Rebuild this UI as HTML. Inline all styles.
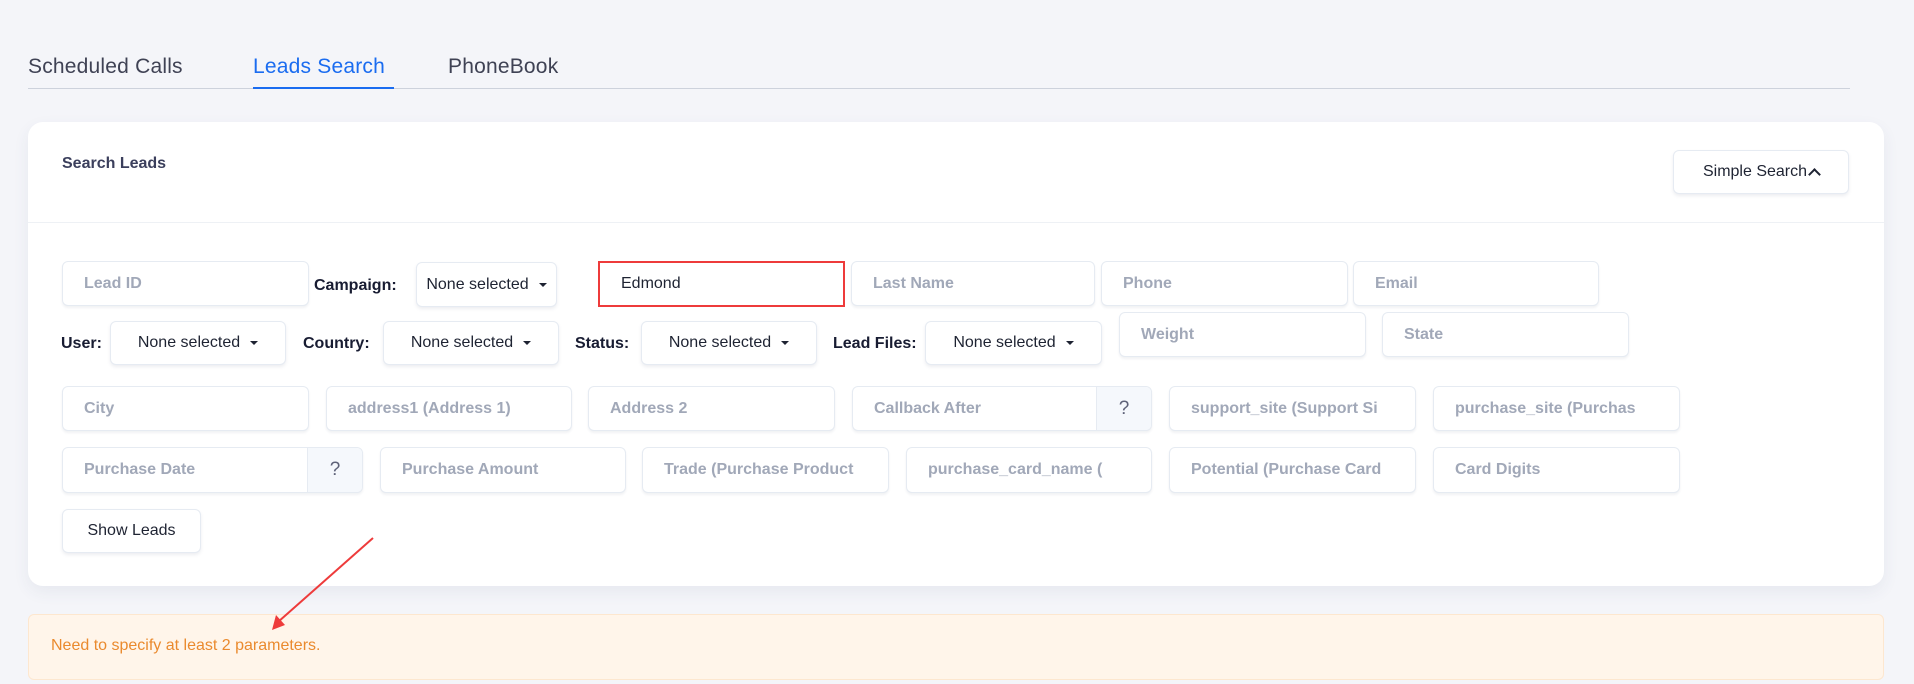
<!DOCTYPE html>
<html><head><meta charset="utf-8"><style>
*{box-sizing:border-box;margin:0;padding:0}
body{width:1914px;height:684px;background:#f4f5f9;font-family:"Liberation Sans",sans-serif;position:relative;overflow:hidden}
.a{position:absolute}
.tab{position:absolute;top:55px;font-size:21px;color:#3f4254;letter-spacing:0.2px}
.card{left:28px;top:122px;width:1856px;height:464px;background:#fff;border-radius:15px;box-shadow:0 6px 16px rgba(60,70,110,.07)}
.inp{position:absolute;background:#fff;border:1px solid #e6ebf2;border-radius:6px;box-shadow:0 2px 2px rgba(80,90,120,.08);color:#a1a8b8;font-size:16px;font-weight:bold;padding-left:21px;white-space:nowrap;overflow:hidden;display:flex;align-items:center}
.sel{position:absolute;background:#fff;border:1px solid #e6ebf2;border-radius:6px;box-shadow:0 2px 3px rgba(80,90,120,.1);color:#1e2332;font-size:16px;display:flex;align-items:center;justify-content:center;white-space:nowrap}
.sel:after{content:"";border-left:4px solid transparent;border-right:4px solid transparent;border-top:4px solid #1e2332;margin-left:10px}
.sel.ns:after{display:none}
.lbl{position:absolute;font-size:16px;font-weight:bold;color:#181c32}
.q{position:absolute;right:0;top:0;bottom:0;background:#f5f8fc;border-left:1px solid #e6ebf2;width:55px;display:flex;align-items:center;justify-content:center;color:#5e6278;font-size:19px;font-weight:normal}
</style></head><body>
<div class="tab" style="left:28px">Scheduled Calls</div>
<div class="tab" style="left:253px;color:#1a6cf0">Leads Search</div>
<div class="tab" style="left:448px">PhoneBook</div>
<div class="a" style="left:28px;top:88px;width:1822px;height:1px;background:#cdd2dc"></div>
<div class="a" style="left:253px;top:87px;width:141px;height:2px;background:#1a6cf0"></div>

<div class="a card"></div>
<div class="a" style="left:62px;top:155px;font-size:16px;font-weight:bold;color:#3b3f5c">Search Leads</div>
<div class="a" style="left:28px;top:222px;width:1856px;height:1px;background:#eef1f5"></div>
<div class="sel ns" style="left:1673px;top:150px;width:176px;height:44px">Simple Search<span style="display:inline-block;width:9px;height:9px;border-left:2px solid #1e2332;border-top:2px solid #1e2332;transform:rotate(45deg);margin-left:3px;margin-top:5px"></span></div>

<div class="inp" style="left:62px;top:261px;width:247px;height:45px">Lead ID</div>
<div class="lbl" style="left:314px;top:277px">Campaign:</div>
<div class="sel" style="left:416px;top:262px;width:141px;height:45px">None selected</div>
<div class="inp" style="left:598px;top:261px;width:247px;height:46px;border:2px solid #ee3b3b;border-radius:0;box-shadow:none;color:#1e2332;font-weight:normal">Edmond</div>
<div class="inp" style="left:851px;top:261px;width:244px;height:45px">Last Name</div>
<div class="inp" style="left:1101px;top:261px;width:247px;height:45px">Phone</div>
<div class="inp" style="left:1353px;top:261px;width:246px;height:45px">Email</div>

<div class="lbl" style="left:61px;top:335px">User:</div>
<div class="sel" style="left:110px;top:321px;width:176px;height:44px">None selected</div>
<div class="lbl" style="left:303px;top:335px">Country:</div>
<div class="sel" style="left:383px;top:321px;width:176px;height:44px">None selected</div>
<div class="lbl" style="left:575px;top:335px">Status:</div>
<div class="sel" style="left:641px;top:321px;width:176px;height:44px">None selected</div>
<div class="lbl" style="left:833px;top:335px">Lead Files:</div>
<div class="sel" style="left:925px;top:321px;width:177px;height:44px">None selected</div>
<div class="inp" style="left:1119px;top:312px;width:247px;height:45px">Weight</div>
<div class="inp" style="left:1382px;top:312px;width:247px;height:45px">State</div>

<div class="inp" style="left:62px;top:386px;width:247px;height:45px">City</div>
<div class="inp" style="left:326px;top:386px;width:246px;height:45px">address1 (Address 1)</div>
<div class="inp" style="left:588px;top:386px;width:247px;height:45px">Address 2</div>
<div class="inp" style="left:852px;top:386px;width:300px;height:45px">Callback After<div class="q">?</div></div>
<div class="inp" style="left:1169px;top:386px;width:247px;height:45px">support_site (Support Si</div>
<div class="inp" style="left:1433px;top:386px;width:247px;height:45px">purchase_site (Purchas</div>

<div class="inp" style="left:62px;top:447px;width:301px;height:46px">Purchase Date<div class="q">?</div></div>
<div class="inp" style="left:380px;top:447px;width:246px;height:46px">Purchase Amount</div>
<div class="inp" style="left:642px;top:447px;width:247px;height:46px">Trade (Purchase Product</div>
<div class="inp" style="left:906px;top:447px;width:246px;height:46px">purchase_card_name (</div>
<div class="inp" style="left:1169px;top:447px;width:247px;height:46px">Potential (Purchase Card</div>
<div class="inp" style="left:1433px;top:447px;width:247px;height:46px">Card Digits</div>

<div class="sel ns" style="left:62px;top:509px;width:139px;height:44px">Show Leads</div>

<div class="a" style="left:28px;top:614px;width:1856px;height:66px;background:#fff5ea;border:1px solid #fde7cf;border-radius:6px"></div>
<div class="a" style="left:51px;top:637px;font-size:16px;color:#ea8a2e">Need to specify at least 2 parameters.</div>

<svg class="a" style="left:0;top:0" width="1914" height="684"><line x1="373" y1="538" x2="278" y2="622" stroke="#ee3b3b" stroke-width="2"/><polygon points="272,630 276,615 285,625" fill="#ee3b3b"/></svg>
</body></html>
